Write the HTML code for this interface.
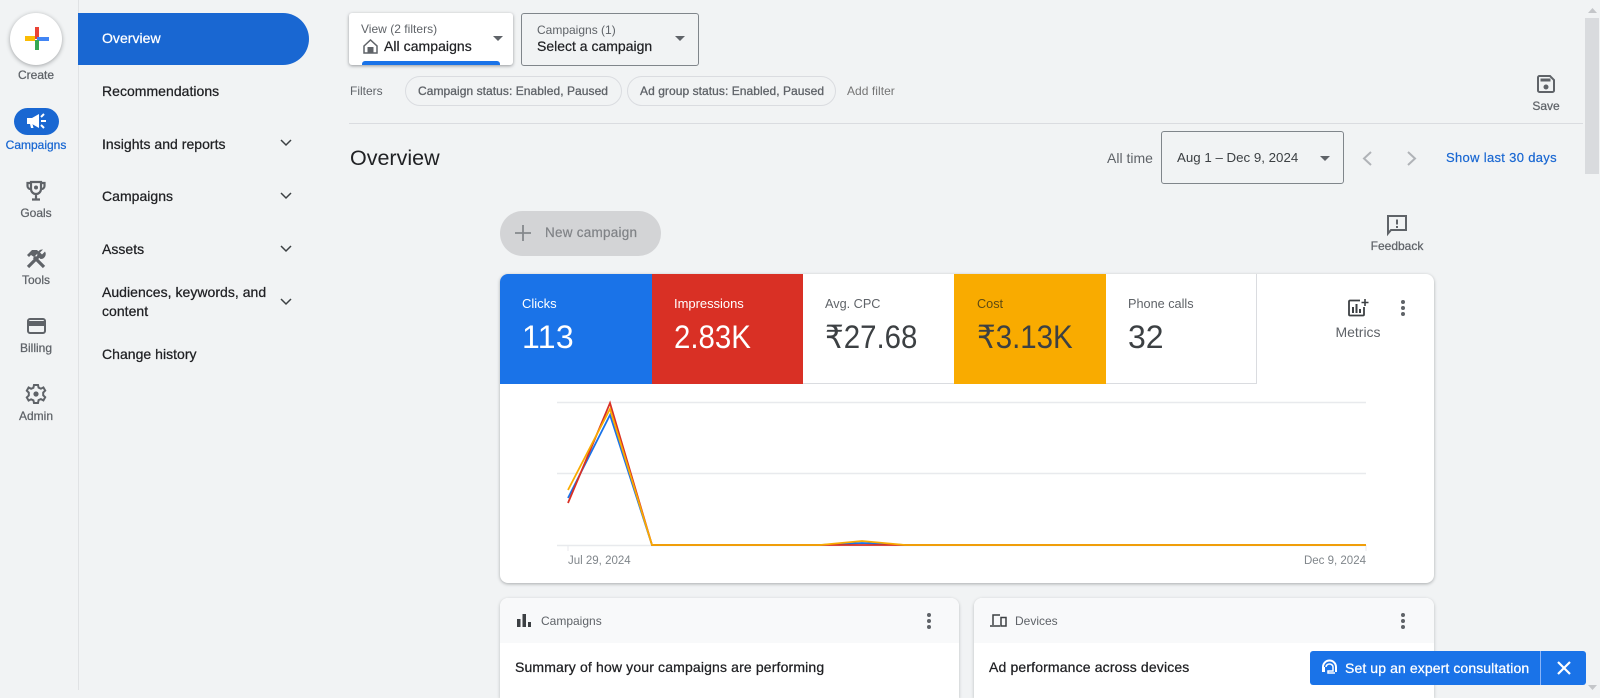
<!DOCTYPE html>
<html><head><meta charset="utf-8"><style>
html,body{margin:0;padding:0;width:1600px;height:690px;overflow:hidden;background:#f1f3f4;font-family:"Liberation Sans",sans-serif;color:#3c4043}
.a{position:absolute}
.t{position:absolute;line-height:20px;white-space:nowrap}
.c{transform:translateX(-50%)}
.n{font-size:12px;color:#5f6368;-webkit-text-stroke:.25px}
.m{font-size:14px;color:#202124;-webkit-text-stroke:.25px;letter-spacing:.15px}
.s{letter-spacing:.03px}
.k{font-size:13px}
.v{font-size:32px;line-height:40px}
.q{transform:scaleX(.92);transform-origin:left center}
svg{position:absolute;overflow:visible}
</style></head><body>
<div class="a" style="left:78px;top:0;width:1px;height:690px;background:#e0e2e4"></div>

<div class="a" style="left:10px;top:13px;width:52px;height:52px;border-radius:50%;background:#fff;box-shadow:0 1px 4px rgba(60,64,67,.45)"></div>
<div class="a" style="left:25px;top:36px;width:10px;height:4.500px;background:#fbbc04"></div>
<div class="a" style="left:34.500px;top:27px;width:4px;height:12px;background:#ea4335"></div>
<div class="a" style="left:37px;top:36.500px;width:12px;height:4px;background:#4285f4"></div>
<div class="a" style="left:34.500px;top:40px;width:4px;height:10px;background:#34a853"></div>
<div class="t n c" style="left:36px;top:65px">Create</div>

<div class="a" style="left:14px;top:108px;width:45px;height:27px;border-radius:14px;background:#1967d2"></div>
<svg style="left:26px;top:113px" width="22" height="17" viewBox="0 0 22 17"><path d="M1 5h5l7-4v14l-7-4H1zM4 11l1 4h2.500l-1-4z" fill="#fff"/><path d="M15 4l3-3M15 8h5M15 12l3 3" stroke="#fff" stroke-width="2" fill="none"/></svg>
<div class="t c" style="left:36px;top:135px;font-size:12px;color:#1967d2;-webkit-text-stroke:.25px">Campaigns</div>

<svg style="left:26px;top:180px" width="20" height="21" viewBox="0 0 20 21" fill="none" stroke="#5f6368" stroke-width="2.200"><path d="M5 2h10v7a5 5 0 0 1-10 0zM5 3H1.500v3a3 3 0 0 0 3.500 3M15 3h3.500v3a3 3 0 0 1-3.500 3M10 14v5M6 19.500h8"/><circle cx="10" cy="7.500" r="2" fill="#5f6368" stroke="none"/></svg>
<div class="t n c" style="left:36px;top:203px">Goals</div>

<svg style="left:26px;top:249px" width="20" height="20" viewBox="0 0 20 20"><path d="M2 18L14 6" stroke="#5f6368" stroke-width="3.200" fill="none"/><path d="M19 2.500l-3 3-2-2 3-3a5 5 0 0 0-5.500 6.500l3 3a5 5 0 0 0 4.500-7.500z" fill="#5f6368"/><path d="M18 18L8 8" stroke="#5f6368" stroke-width="3.200" fill="none"/><path d="M1 6L6 1h5l2 2-5 5-3-2-2 2z" fill="#5f6368"/></svg>
<div class="t n c" style="left:36px;top:270px">Tools</div>

<div class="a" style="left:27px;top:318px;width:19px;height:16px;border:2.500px solid #5f6368;border-radius:3px;box-sizing:border-box"></div>
<div class="a" style="left:28px;top:321px;width:17px;height:4.500px;background:#5f6368"></div>
<div class="t n c" style="left:36px;top:338px">Billing</div>

<svg style="left:26px;top:384px" width="20" height="20" viewBox="0 0 20 20" fill="none" stroke="#5f6368" stroke-width="2"><path d="M8 1h4l.6 2.700 2.300 1 2.500-1.300 1.800 3.200-2 1.900v2.800l2 1.900-1.800 3.200-2.500-1.300-2.300 1L12 19H8l-.6-2.700-2.300-1-2.500 1.300L.8 13.400l2-1.900V8.600l-2-1.900 1.800-3.200 2.500 1.300 2.300-1z"/><circle cx="10" cy="10" r="2.600" fill="#5f6368" stroke="none"/></svg>
<div class="t n c" style="left:36px;top:406px">Admin</div>

<div class="a" style="left:78px;top:13px;width:231px;height:52px;background:#1967d2;border-radius:0 26px 26px 0"></div>
<div class="t m s" style="left:102px;top:28px;color:#fff">Overview</div>
<div class="t m s" style="left:102px;top:81px">Recommendations</div>
<div class="t m s" style="left:102px;top:134px">Insights and reports</div>
<div class="t m s" style="left:102px;top:186px">Campaigns</div>
<div class="t m s" style="left:102px;top:239px">Assets</div>
<div class="t m s" style="left:102px;top:282px">Audiences, keywords, and</div>
<div class="t m s" style="left:102px;top:301px">content</div>
<div class="t m s" style="left:102px;top:344px">Change history</div>
<svg style="left:280px;top:139px" width="12" height="8"><path d="M1 1l5 5 5-5" stroke="#3c4043" stroke-width="1.500" fill="none"/></svg>
<svg style="left:280px;top:192px" width="12" height="8"><path d="M1 1l5 5 5-5" stroke="#3c4043" stroke-width="1.500" fill="none"/></svg>
<svg style="left:280px;top:245px" width="12" height="8"><path d="M1 1l5 5 5-5" stroke="#3c4043" stroke-width="1.500" fill="none"/></svg>
<svg style="left:280px;top:298px" width="12" height="8"><path d="M1 1l5 5 5-5" stroke="#3c4043" stroke-width="1.500" fill="none"/></svg>

<div class="a" style="left:349px;top:13px;width:164px;height:52px;background:#fff;border-radius:3px;box-shadow:0 1px 3px rgba(60,64,67,.5);overflow:hidden">
<div class="a" style="left:13px;top:48px;width:138px;height:6px;background:#1a73e8;border-radius:3px 3px 0 0"></div></div>
<div class="t" style="left:361px;top:19px;font-size:12px;color:#5f6368;letter-spacing:.02px">View (2 filters)</div>
<svg style="left:363px;top:39px" width="15" height="15" viewBox="0 0 15 15"><path d="M1 7l6.500-6L14 7v7H1z" fill="none" stroke="#5f6368" stroke-width="1.500"/><rect x="4.500" y="8" width="6" height="6" fill="#5f6368"/></svg>
<div class="t" style="left:384px;top:36px;font-size:14px;color:#202124;-webkit-text-stroke:.2px;letter-spacing:.05px">All campaigns</div>
<svg style="left:493px;top:36px" width="10" height="5"><path d="M0 0h10L5 5z" fill="#5f6368"/></svg>

<div class="a" style="left:521px;top:13px;width:178px;height:53px;box-sizing:border-box;border:1px solid #80868b;border-radius:3px"></div>
<div class="t" style="left:537px;top:20px;font-size:12px;color:#5f6368">Campaigns (1)</div>
<div class="t" style="left:537px;top:36px;font-size:14px;color:#202124;-webkit-text-stroke:.2px">Select a campaign</div>
<svg style="left:675px;top:36px" width="10" height="5"><path d="M0 0h10L5 5z" fill="#5f6368"/></svg>

<div class="t" style="left:350px;top:81px;font-size:12px;color:#5f6368">Filters</div>
<div class="a" style="left:405px;top:76px;width:217px;height:30px;box-sizing:border-box;border:1px solid #dadce0;border-radius:15px"></div>
<div class="t" style="left:418px;top:81px;font-size:12px;color:#5f6368;-webkit-text-stroke:.3px;letter-spacing:.06px">Campaign status: Enabled, Paused</div>
<div class="a" style="left:627px;top:76px;width:209px;height:30px;box-sizing:border-box;border:1px solid #dadce0;border-radius:15px"></div>
<div class="t" style="left:640px;top:81px;font-size:12px;color:#5f6368;-webkit-text-stroke:.3px;letter-spacing:.06px">Ad group status: Enabled, Paused</div>
<div class="t" style="left:847px;top:81px;font-size:12px;color:#757575;letter-spacing:.05px">Add filter</div>

<svg style="left:1537px;top:75px" width="18" height="18" viewBox="0 0 18 18"><path d="M1 2.500A1.500 1.500 0 0 1 2.500 1H13l4 4v10.500a1.500 1.500 0 0 1-1.500 1.500h-13A1.500 1.500 0 0 1 1 15.500z" fill="none" stroke="#5f6368" stroke-width="2"/><rect x="3.500" y="3.500" width="10" height="3" fill="#5f6368"/><circle cx="9" cy="12" r="2.500" fill="#5f6368"/></svg>
<div class="t n c" style="left:1546px;top:96px">Save</div>
<div class="a" style="left:349px;top:123px;width:1234px;height:1px;background:#dadce0"></div>

<div class="t" style="left:350px;top:147px;font-size:21.500px;line-height:22px;color:#202124">Overview</div>
<div class="t" style="left:1107px;top:148px;font-size:14px;color:#5f6368">All time</div>
<div class="a" style="left:1161px;top:131px;width:183px;height:53px;box-sizing:border-box;border:1px solid #80868b;border-radius:3px"></div>
<div class="t" style="left:1177px;top:148px;font-size:13.300px;color:#3c4043">Aug 1 – Dec 9, 2024</div>
<svg style="left:1320px;top:156px" width="10" height="5"><path d="M0 0h10L5 5z" fill="#5f6368"/></svg>
<svg style="left:1362px;top:151px" width="10" height="15"><path d="M9 1L2 7.500 9 14" stroke="#b0b3b7" stroke-width="2" fill="none"/></svg>
<svg style="left:1407px;top:151px" width="10" height="15"><path d="M1 1l7 6.500L1 14" stroke="#b0b3b7" stroke-width="2" fill="none"/></svg>
<div class="t" style="left:1446px;top:148px;font-size:13px;color:#1967d2;-webkit-text-stroke:.2px;letter-spacing:.32px">Show last 30 days</div>

<div class="a" style="left:1585px;top:18px;width:14px;height:156px;background:#d9dbde"></div>
<svg style="left:1588px;top:8px" width="9" height="5"><path d="M0 5h9L4.500 0z" fill="#c4c6c9"/></svg>
<svg style="left:1588px;top:685px" width="9" height="5"><path d="M0 0h9L4.500 5z" fill="#c4c6c9"/></svg>

<div class="a" style="left:500px;top:211px;width:161px;height:45px;border-radius:23px;background:#d3d4d6"></div>
<svg style="left:515px;top:225px" width="16" height="16"><path d="M8 0v16M0 8h16" stroke="#85888c" stroke-width="1.800"/></svg>
<div class="t" style="left:545px;top:223px;font-size:13.500px;color:#808387;-webkit-text-stroke:.2px;letter-spacing:.25px">New campaign</div>

<svg style="left:1387px;top:215px" width="20" height="20" viewBox="0 0 20 20"><path d="M1 1h18v14H4l-3 3.500z" fill="none" stroke="#5f6368" stroke-width="2"/><path d="M10 4.500v5M10 11v2" stroke="#5f6368" stroke-width="2"/></svg>
<div class="t n c" style="left:1397px;top:236px">Feedback</div>

<div class="a" style="left:500px;top:274px;width:934px;height:309px;background:#fff;border-radius:8px;box-shadow:0 1px 3px rgba(60,64,67,.4);overflow:hidden">
<div class="a" style="left:0;top:0;width:152px;height:110px;background:#1a73e8"></div>
<div class="a" style="left:152px;top:0;width:151px;height:110px;background:#d93025"></div>
<div class="a" style="left:303px;top:0;width:151px;height:110px;box-sizing:border-box;border-bottom:1px solid #dadce0"></div>
<div class="a" style="left:454px;top:0;width:152px;height:110px;background:#f9ab00"></div>
<div class="a" style="left:606px;top:0;width:151px;height:110px;box-sizing:border-box;border-bottom:1px solid #dadce0;border-right:1px solid #dadce0"></div>
</div>
<div class="t k" style="left:522px;top:294px;color:#fff">Clicks</div>
<div class="t v" style="left:522px;top:317px;color:#fff;letter-spacing:.3px">113</div>
<div class="t k" style="left:674px;top:294px;color:#fff;letter-spacing:-.03px">Impressions</div>
<div class="t v q" style="left:674px;top:317px;color:#fff">2.83K</div>
<div class="t k" style="left:825px;top:294px;color:#5f6368;font-size:12.700px">Avg. CPC</div>
<div class="t v q" style="left:825px;top:317px;font-family:'Liberation Sans','DejaVu Sans',sans-serif">₹27.68</div>
<div class="t k" style="left:977px;top:294px;color:#5f4b12;font-size:12.700px">Cost</div>
<div class="t v q" style="left:977px;top:317px;font-family:'Liberation Sans','DejaVu Sans',sans-serif">₹3.13K</div>
<div class="t k" style="left:1128px;top:294px;color:#5f6368;font-size:12.700px">Phone calls</div>
<div class="t v" style="left:1128px;top:317px">32</div>

<svg style="left:1348px;top:299px" width="21" height="18" viewBox="0 0 21 18"><path d="M12 1.500H2A1 1 0 0 0 1 2.500v13a1 1 0 0 0 1 1h13a1 1 0 0 0 1-1V8" fill="none" stroke="#3c4043" stroke-width="1.800"/><path d="M5 8v6M8.500 5v9M12 10v4" stroke="#3c4043" stroke-width="2"/><path d="M17 0v7M13.500 3.500h7" stroke="#3c4043" stroke-width="1.600"/></svg>
<div class="t c" style="left:1358px;top:322px;font-size:14px;color:#5f6368">Metrics</div>
<svg style="left:1400px;top:300px" width="6" height="16"><circle cx="3" cy="2" r="2" fill="#5f6368"/><circle cx="3" cy="8" r="2" fill="#5f6368"/><circle cx="3" cy="14" r="2" fill="#5f6368"/></svg>

<svg style="left:0;top:0" width="1600" height="690">
<path d="M557 402.500H1366M557 473.500H1366M557 545.500H1366" stroke="#e8eaed" stroke-width="1.500"/>
<path d="M568 545v6M1366 545v6" stroke="#e8eaed"/>
<path d="M568 498L610 415 652 545H820L862 543 905 545H1366" stroke="#1a73e8" stroke-width="1.800" fill="none"/>
<path d="M568 503L610 403 652 545H820L862 545 905 545H1366" stroke="#d93025" stroke-width="1.800" fill="none"/>
<path d="M568 490L610 409 652 545H820L862 541 905 545H1366" stroke="#f9ab00" stroke-width="1.800" fill="none"/>
</svg>
<div class="t" style="left:568px;top:551px;font-size:11.500px;color:#80868b">Jul 29, 2024</div>
<div class="t" style="right:234px;top:551px;font-size:11.500px;color:#80868b">Dec 9, 2024</div>

<div class="a" style="left:500px;top:598px;width:459px;height:100px;background:#fff;border-radius:8px 8px 0 0;box-shadow:0 1px 3px rgba(60,64,67,.3);overflow:hidden"><div class="a" style="left:0;top:0;width:459px;height:45px;background:#f8f9fa"></div></div>
<svg style="left:517px;top:614px" width="14" height="13"><path d="M0 5h3.500v8H0zM5.500 0H9v13H5.500zM11 8h3v5h-3z" fill="#3c4043"/></svg>
<div class="t" style="left:541px;top:611px;font-size:12px;color:#5f6368">Campaigns</div>
<svg style="left:926px;top:613px" width="6" height="16"><circle cx="3" cy="2" r="2" fill="#5f6368"/><circle cx="3" cy="8" r="2" fill="#5f6368"/><circle cx="3" cy="14" r="2" fill="#5f6368"/></svg>
<div class="t m" style="left:515px;top:657px">Summary of how your campaigns are performing</div>

<div class="a" style="left:974px;top:598px;width:460px;height:100px;background:#fff;border-radius:8px 8px 0 0;box-shadow:0 1px 3px rgba(60,64,67,.3);overflow:hidden"><div class="a" style="left:0;top:0;width:460px;height:45px;background:#f8f9fa"></div></div>
<svg style="left:990px;top:614px" width="17" height="13" viewBox="0 0 17 13" fill="none" stroke="#3c4043" stroke-width="1.500"><path d="M10 1H3v10M0 12h10"/><rect x="11" y="3.500" width="5" height="8.500"/></svg>
<div class="t" style="left:1015px;top:611px;font-size:12px;color:#5f6368">Devices</div>
<svg style="left:1400px;top:613px" width="6" height="16"><circle cx="3" cy="2" r="2" fill="#5f6368"/><circle cx="3" cy="8" r="2" fill="#5f6368"/><circle cx="3" cy="14" r="2" fill="#5f6368"/></svg>
<div class="t m" style="left:989px;top:657px">Ad performance across devices</div>

<div class="a" style="left:1310px;top:651px;width:276px;height:34px;background:#1a73e8;border-radius:3px"></div>
<div class="a" style="left:1540px;top:651px;width:1px;height:34px;background:#8ab4f8"></div>
<svg style="left:1322px;top:660px" width="15" height="15" viewBox="0 0 15 15"><path d="M1 12V7a6.500 6.500 0 0 1 13 0v5" fill="none" stroke="#fff" stroke-width="2"/><path d="M4 7a3.500 3 0 0 1 7 0v4H6v2h7" fill="none" stroke="#fff" stroke-width="1.500"/><rect x="0" y="7" width="3" height="5" fill="#fff"/></svg>
<div class="t" style="left:1345px;top:658px;font-size:14px;color:#fff;-webkit-text-stroke:.25px;letter-spacing:.1px">Set up an expert consultation</div>
<svg style="left:1557px;top:661px" width="14" height="14"><path d="M1 1l12 12M13 1L1 13" stroke="#fff" stroke-width="2.200"/></svg>
</body></html>
